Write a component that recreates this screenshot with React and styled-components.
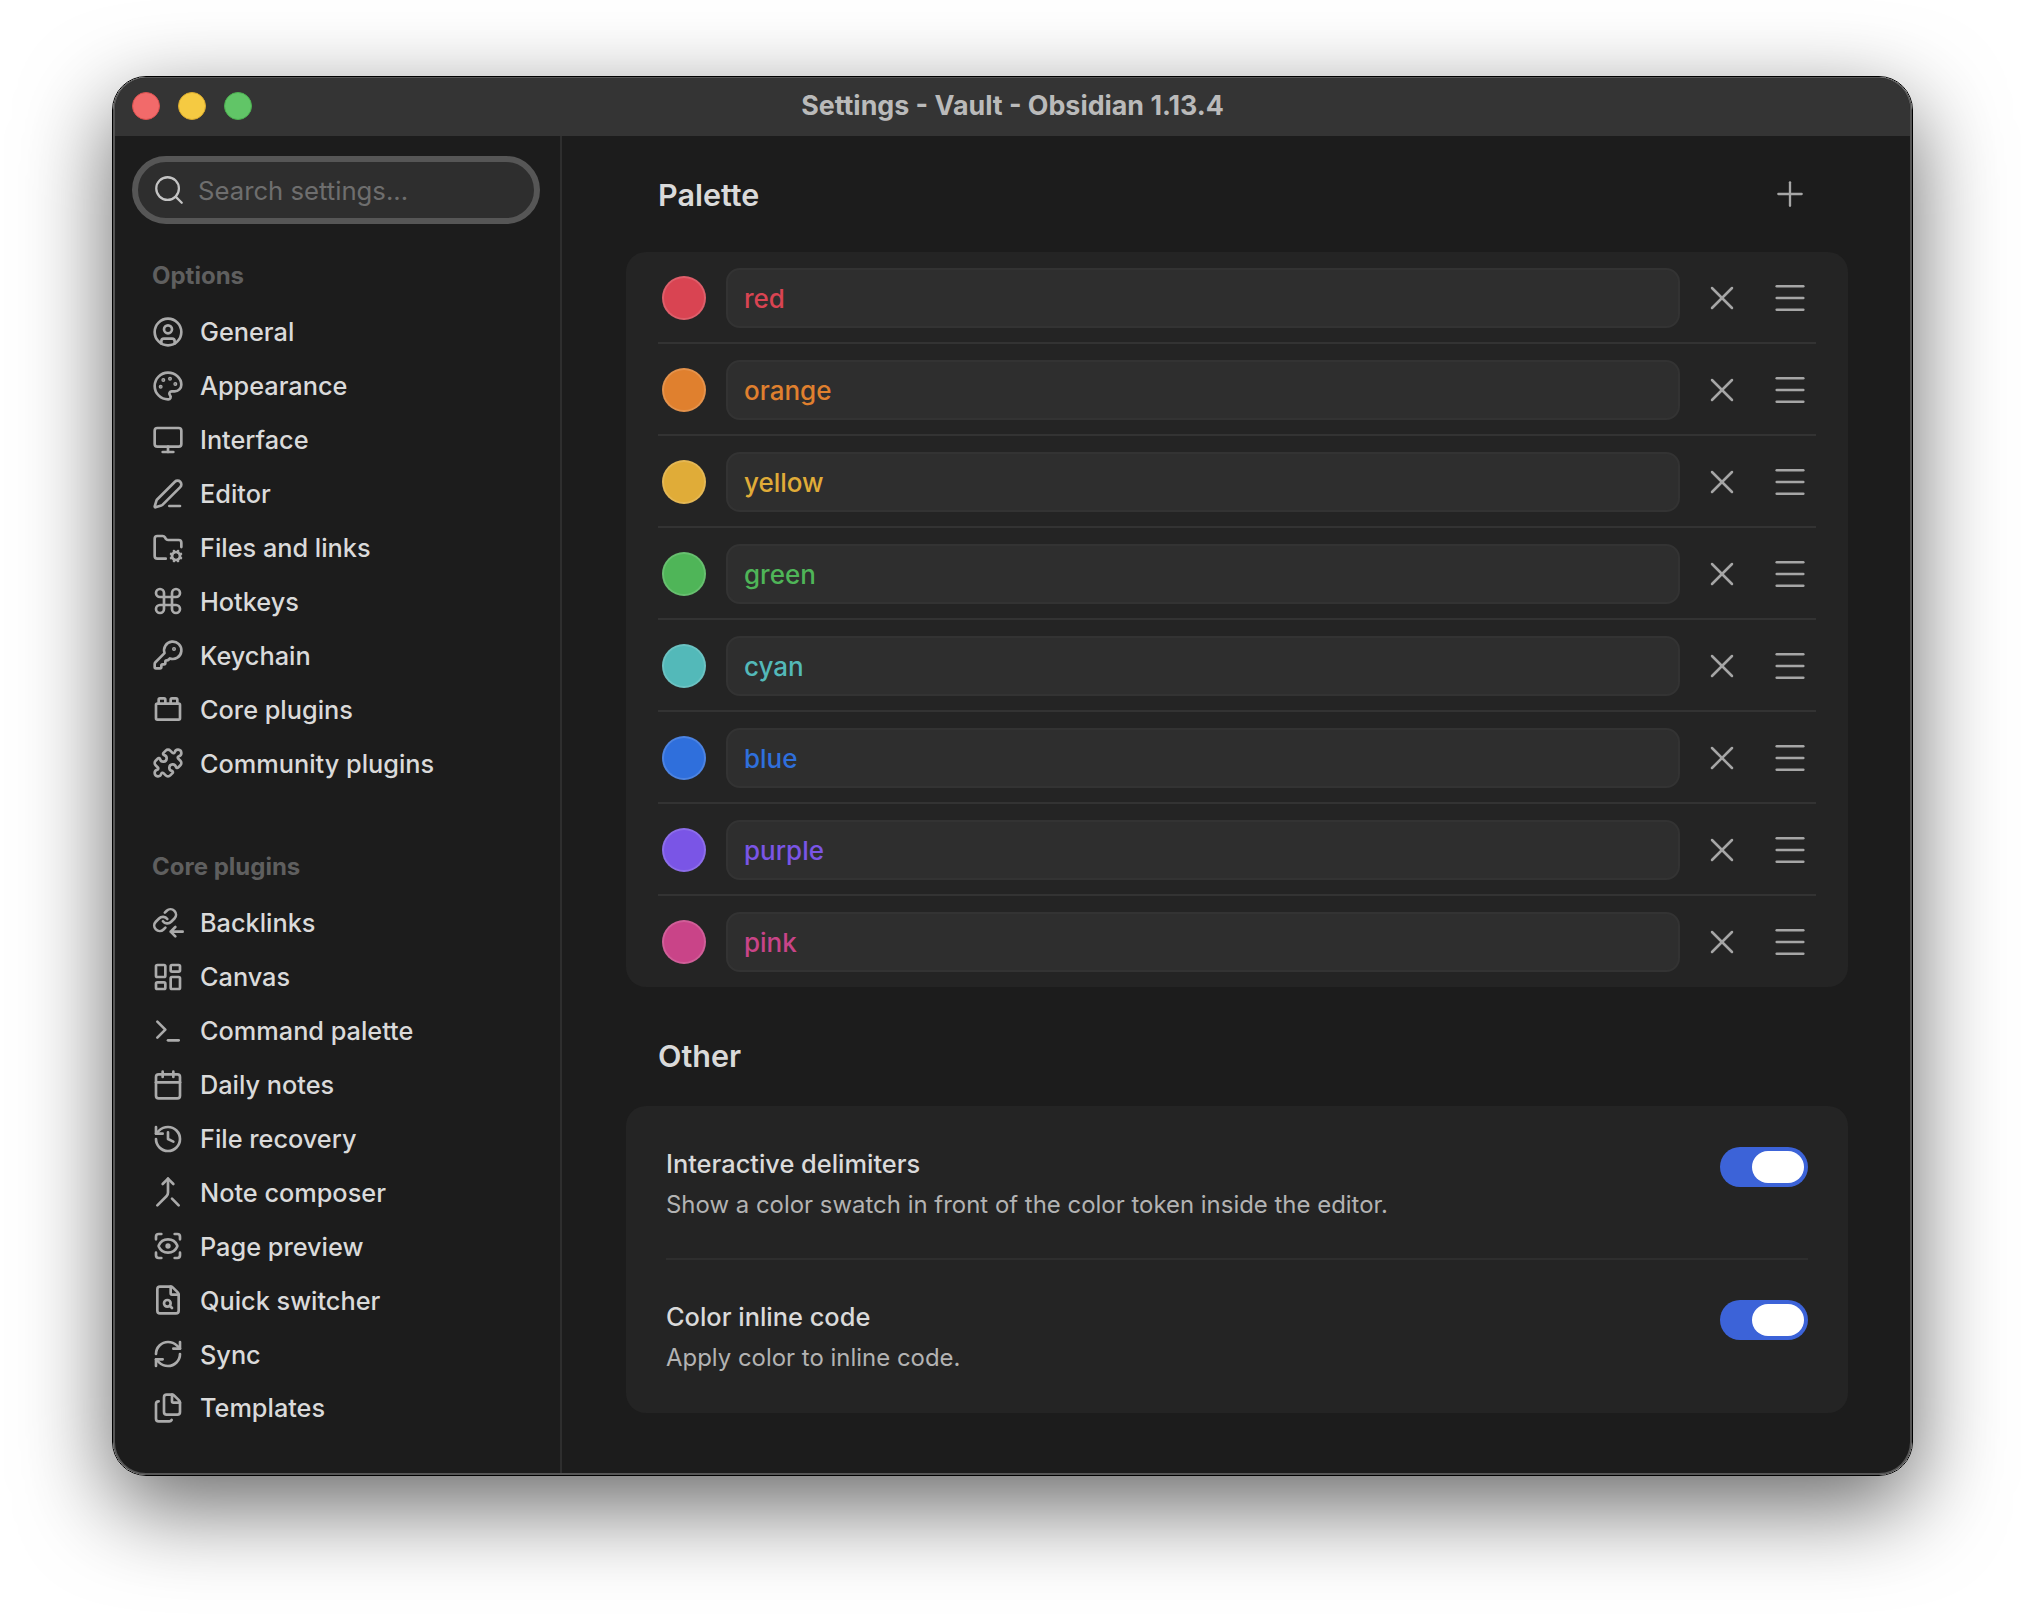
import styled, { createGlobalStyle } from 'styled-components';
import {
  Calendar,
  CircleUser,
  Command,
  Files,
  FileSearch,
  FolderCog,
  History,
  KeyRound,
  LayoutDashboard,
  Menu,
  Merge,
  Monitor,
  Palette,
  PenLine,
  Plus,
  Puzzle,
  RefreshCw,
  ScanEye,
  Search,
  Terminal,
  ToyBrick,
  X,
} from 'lucide-react';

const GlobalStyle = createGlobalStyle`
  html, body {
    margin: 0;
    background: #fff;
    font-family: Inter, "Liberation Sans", sans-serif;
    -webkit-font-smoothing: antialiased;
  }
  * { box-sizing: border-box; }
`;

const Page = styled.div`
  width: 2024px;
  height: 1624px;
  padding: 76px 0 0 112px;
  overflow: hidden;
`;

const Window = styled.div`
  width: 1801px;
  height: 1400px;
  border: 1px solid #000;
  border-radius: 34px;
  box-shadow: 0 30px 90px rgba(0, 0, 0, 0.6);
`;

const Frame = styled.div`
  height: 100%;
  display: flex;
  flex-direction: column;
  border: 2px solid #565656;
  border-top-width: 1px;
  border-radius: 33px;
  background: #1c1c1c;
  overflow: hidden;
`;

const TitleBar = styled.header`
  height: 58px;
  flex: none;
  display: grid;
  grid-template-columns: 1fr auto 1fr;
  align-items: center;
  padding: 0 17px 3px;
  background: #343434;
`;

const Lights = styled.div`
  display: flex;
  gap: 18px;
`;

const Light = styled.span`
  width: 28px;
  height: 28px;
  border-radius: 50%;
  background: ${(p) => p.$color};
  border: 1px solid ${(p) => p.$edge};
`;

const Title = styled.div`
  padding-bottom: 2px;
  font-size: 26.8px;
  font-weight: 700;
  color: #bababa;
`;

const Body = styled.div`
  flex: 1;
  display: flex;
  min-height: 0;
`;

const Sidebar = styled.nav`
  width: 447px;
  flex: none;
  padding: 20px 20px 0 17px;
  border-right: 2px solid #2e2e2e;
`;

const SearchBox = styled.div`
  height: 68px;
  display: flex;
  align-items: center;
  gap: 12px;
  padding: 0 16px;
  border: 6px solid #565656;
  border-radius: 34px;
  background: #2e2e2e;
  color: #c4c4c4;
  svg {
    margin-left: -2px;
    flex: none;
  }
`;

const Placeholder = styled.span`
  font-size: 25.7px;
  color: #6e6e6e;
`;

const GroupLabel = styled.div`
  height: 30px;
  line-height: 30px;
  margin: ${(p) => p.$top}px 0 14px 20px;
  font-size: 24px;
  font-weight: 700;
  color: #5f5f5f;
`;

const NavItem = styled.div`
  height: 53.9px;
  display: flex;
  align-items: center;
  gap: 16px;
  padding-left: 20px;
  font-size: 25.3px;
  font-weight: 450;
  color: #dadada;
  svg {
    flex: none;
    color: #ababab;
  }
`;

const Content = styled.main`
  flex: 1;
  min-width: 0;
  padding: 29px 62px 0 64px;
`;

const SectionHead = styled.div`
  height: 58px;
  display: flex;
  align-items: center;
  justify-content: space-between;
  padding: 0 40px 0 32px;
  margin: ${(p) => p.$top || 0}px 0 ${(p) => p.$bottom}px;
`;

const SectionTitle = styled.h2`
  margin: 0;
  font-size: 30.5px;
  font-weight: 600;
  color: #dadada;
`;

const IconButton = styled.span`
  width: 36px;
  height: 36px;
  display: flex;
  align-items: center;
  justify-content: center;
  color: #a6a6a6;
  svg {
    flex: none;
  }
`;

const Card = styled.section`
  background: #242424;
  border-radius: 20px;
`;

const PaletteCard = styled(Card)`
  padding: 0 32px 1px;
`;

const ColorRow = styled.div`
  display: flex;
  align-items: center;
  padding: 16px 8px 14px 4px;
  border-bottom: 2px solid #333;
  &:last-child {
    border-bottom: 0;
  }
`;

const Swatch = styled.span`
  width: 44px;
  height: 44px;
  flex: none;
  border-radius: 50%;
  background: ${(p) => p.$color};
  border: 2px solid rgba(255, 255, 255, 0.14);
`;

const ColorInput = styled.div`
  flex: 1;
  height: 60px;
  display: flex;
  align-items: center;
  margin: 0 24px 0 20px;
  padding: 0 16px;
  border: 2px solid #333;
  border-radius: 14px;
  background: #2e2e2e;
  font-size: 26px;
  font-weight: 500;
  color: ${(p) => p.$color};
`;

const Actions = styled.div`
  display: flex;
  gap: 32px;
`;

const SettingsCard = styled(Card)`
  padding: 1px 40px 2px;
`;

const SettingItem = styled.div`
  display: flex;
  justify-content: space-between;
  padding: 40px 0 36px;
  border-bottom: 2px solid #2e2e2e;
  &:last-child {
    border-bottom: 0;
  }
`;

const SettingText = styled.div`
  padding-top: 1px;
  margin-bottom: -1px;
`;

const SettingName = styled.div`
  line-height: 32px;
  font-size: 25.4px;
  font-weight: 450;
  color: #dadada;
`;

const SettingDesc = styled.div`
  margin-top: 7px;
  line-height: 36px;
  font-size: 23.95px;
  color: #b3b3b3;
`;

const Toggle = styled.span`
  width: 88px;
  height: 40px;
  display: flex;
  justify-content: flex-end;
  padding: 4px;
  border-radius: 20px;
  background: #3c63d8;
  &::after {
    content: '';
    width: 52px;
    border-radius: 16px;
    background: #fff;
  }
`;

function Backlinks(props) {
  return (
    <svg xmlns="http://www.w3.org/2000/svg" viewBox="0 0 24 24" fill="none" stroke="currentColor" strokeWidth="2" strokeLinecap="round" strokeLinejoin="round" {...props}>
      <g transform="scale(0.82)" strokeWidth="2.44">
        <path d="M10 13a5 5 0 0 0 7.54.54l3-3a5 5 0 0 0-7.07-7.07l-1.72 1.71" />
        <path d="M14 11a5 5 0 0 0-7.54-.54l-3 3a5 5 0 0 0 7.07 7.07l1.71-1.71" />
      </g>
      <path d="M23 18.5h-9M17.5 15l-3.5 3.5 3.5 3.5" />
    </svg>
  );
}

const optionItems = [
  ['General', CircleUser],
  ['Appearance', Palette],
  ['Interface', Monitor],
  ['Editor', PenLine],
  ['Files and links', FolderCog],
  ['Hotkeys', Command],
  ['Keychain', KeyRound],
  ['Core plugins', ToyBrick],
  ['Community plugins', Puzzle],
];

const pluginItems = [
  ['Backlinks', Backlinks],
  ['Canvas', LayoutDashboard],
  ['Command palette', Terminal],
  ['Daily notes', Calendar],
  ['File recovery', History],
  ['Note composer', Merge],
  ['Page preview', ScanEye],
  ['Quick switcher', FileSearch],
  ['Sync', RefreshCw],
  ['Templates', Files],
];

const colors = [
  ['red', '#d94452'],
  ['orange', '#e0802e'],
  ['yellow', '#e0ac38'],
  ['green', '#4fb558'],
  ['cyan', '#53b9b9'],
  ['blue', '#2f6fdc'],
  ['purple', '#7a55e6'],
  ['pink', '#c94488'],
];

const settings = [
  ['Interactive delimiters', 'Show a color swatch in front of the color token inside the editor.'],
  ['Color inline code', 'Apply color to inline code.'],
];

function NavGroup({ items }) {
  return items.map(([label, Icon]) => (
    <NavItem key={label}>
      <Icon width={32} height={32} />
      {label}
    </NavItem>
  ));
}

export default function App() {
  return (
    <Page>
      <GlobalStyle />
      <Window>
        <Frame>
          <TitleBar>
            <Lights>
              <Light $color="#f26a6a" $edge="#d9504f" />
              <Light $color="#f5ca42" $edge="#d8a92e" />
              <Light $color="#61c567" $edge="#4caf50" />
            </Lights>
            <Title>Settings - Vault - Obsidian 1.13.4</Title>
          </TitleBar>
          <Body>
            <Sidebar>
              <SearchBox>
                <Search size={34} strokeWidth={1.6} />
                <Placeholder>Search settings...</Placeholder>
              </SearchBox>
              <GroupLabel $top={37}>Options</GroupLabel>
              <NavGroup items={optionItems} />
              <GroupLabel $top={62}>Core plugins</GroupLabel>
              <NavGroup items={pluginItems} />
            </Sidebar>
            <Content>
              <SectionHead $bottom={29}>
                <SectionTitle>Palette</SectionTitle>
                <IconButton>
                  <Plus size={40} strokeWidth={1.4} />
                </IconButton>
              </SectionHead>
              <PaletteCard>
                {colors.map(([name, color]) => (
                  <ColorRow key={name}>
                    <Swatch $color={color} />
                    <ColorInput $color={color}>{name}</ColorInput>
                    <Actions>
                      <IconButton>
                        <X size={40} strokeWidth={1.5} />
                      </IconButton>
                      <IconButton>
                        <Menu size={40} strokeWidth={1.5} />
                      </IconButton>
                    </Actions>
                  </ColorRow>
                ))}
              </PaletteCard>
              <SectionHead $top={39} $bottom={22}>
                <SectionTitle>Other</SectionTitle>
              </SectionHead>
              <SettingsCard>
                {settings.map(([name, desc]) => (
                  <SettingItem key={name}>
                    <SettingText>
                      <SettingName>{name}</SettingName>
                      <SettingDesc>{desc}</SettingDesc>
                    </SettingText>
                    <Toggle />
                  </SettingItem>
                ))}
              </SettingsCard>
            </Content>
          </Body>
        </Frame>
      </Window>
    </Page>
  );
}
